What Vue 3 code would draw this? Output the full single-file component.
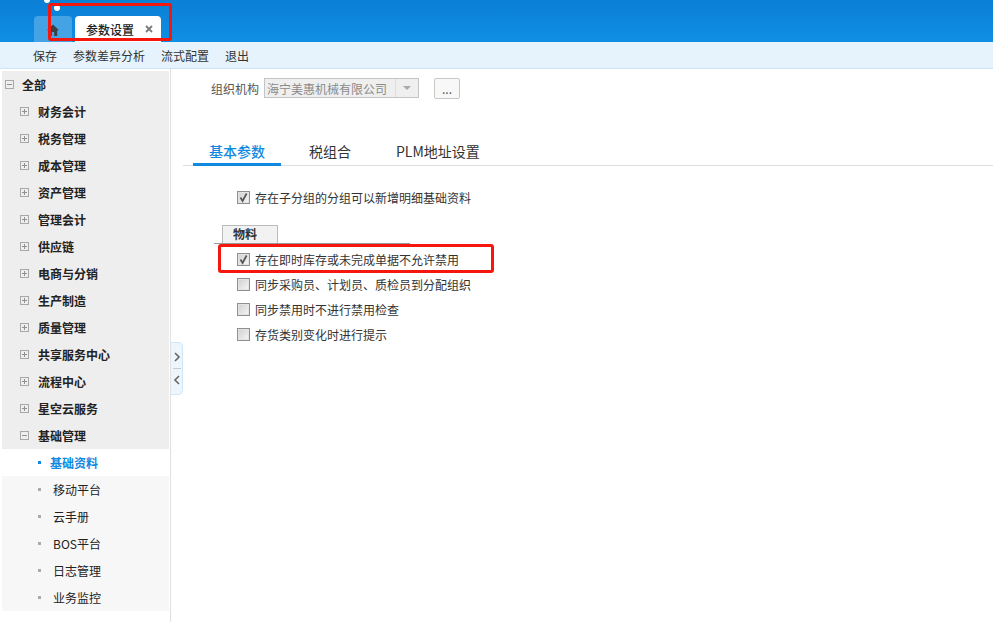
<script setup>
const groups = ['财务会计', '税务管理', '成本管理', '资产管理', '管理会计', '供应链', '电商与分销', '生产制造', '质量管理', '共享服务中心', '流程中心', '星空云服务']
const subItems = ['移动平台', '云手册', 'BOS平台', '日志管理', '业务监控']
const toolbarItems = ['保存', '参数差异分析', '流式配置', '退出']
const tabs = ['基本参数', '税组合', 'PLM地址设置']
const materialOptions = [
  { label: '存在即时库存或未完成单据不允许禁用', checked: true },
  { label: '同步采购员、计划员、质检员到分配组织', checked: false },
  { label: '同步禁用时不进行禁用检查', checked: false },
  { label: '存货类别变化时进行提示', checked: false }
]
</script>

<template>
  <div class="page">
    <header class="topbar">
      <i class="dot dot-a"></i>
      <i class="dot dot-b"></i>
      <div class="home-tab">
        <svg width="12" height="12" viewBox="0 0 12 12"><path d="M6 .5 0 6.2h1.8V12h3V8h2.4v4h3V6.2H12L6 .5z" fill="#3b4047"/></svg>
      </div>
      <div class="active-tab">
        <span>参数设置</span>
        <svg class="close" width="8" height="8" viewBox="0 0 8 8"><path d="M1 1l6 6M7 1 1 7" stroke="#7a7a7a" stroke-width="1.8"/></svg>
      </div>
    </header>

    <nav class="toolbar">
      <span v-for="item in toolbarItems" :key="item">{{ item }}</span>
    </nav>

    <div class="body">
      <aside class="sidebar">
        <div class="row root">
          <i class="box minus"></i>
          <span>全部</span>
        </div>
        <div v-for="g in groups" :key="g" class="row group">
          <i class="box plus"></i>
          <span>{{ g }}</span>
        </div>
        <div class="row group">
          <i class="box minus"></i>
          <span>基础管理</span>
        </div>
        <div class="row sub active">
          <i class="bullet"></i>
          <span>基础资料</span>
        </div>
        <div v-for="s in subItems" :key="s" class="row sub">
          <i class="bullet"></i>
          <span>{{ s }}</span>
        </div>
      </aside>

      <div class="collapse">
        <svg width="8" height="10" viewBox="0 0 8 10"><path d="M2 1l4 4-4 4" fill="none" stroke="#666" stroke-width="1.6"/></svg>
        <i class="collapse-line"></i>
        <svg width="8" height="10" viewBox="0 0 8 10"><path d="M6 1 2 5l4 4" fill="none" stroke="#666" stroke-width="1.6"/></svg>
      </div>

      <main class="content">
        <div class="org">
          <label>组织机构</label>
          <div class="select">
            <span class="select-value">海宁美惠机械有限公司</span>
            <span class="select-arrow"></span>
          </div>
          <button class="more">...</button>
        </div>

        <div class="tabs">
          <div v-for="(t, i) in tabs" :key="t" class="tab" :class="{ current: i === 0 }">{{ t }}</div>
        </div>

        <label class="check first">
          <i class="checkbox checked">
            <svg width="11" height="11" viewBox="0 0 11 11"><path d="M2.5 5.5 4.6 9 8.6 1.5" fill="none" stroke="#555" stroke-width="1.7"/></svg>
          </i>
          <span>存在子分组的分组可以新增明细基础资料</span>
        </label>

        <div class="section">
          <div class="section-title">物料</div>
        </div>

        <div class="options">
          <label v-for="o in materialOptions" :key="o.label" class="check">
            <i class="checkbox" :class="{ checked: o.checked }">
              <svg v-if="o.checked" width="11" height="11" viewBox="0 0 11 11"><path d="M2.5 5.5 4.6 9 8.6 1.5" fill="none" stroke="#555" stroke-width="1.7"/></svg>
            </i>
            <span>{{ o.label }}</span>
          </label>
        </div>
      </main>
    </div>

    <!-- red annotation boxes drawn over the screenshot -->
    <div class="mark mark-tab"></div>
    <div class="mark mark-option"></div>
  </div>
</template>

<style scoped>
.page {
  position: relative;
  width: 993px;
  height: 622px;
  overflow: hidden;
  background: #fff;
  font-family: "Noto Sans CJK SC", "Liberation Sans", sans-serif;
  font-size: 12px;
  color: #333;
}

.topbar {
  position: relative;
  height: 42px;
  box-sizing: border-box;
  padding: 16px 0 0 34px;
  display: flex;
  align-items: flex-end;
  gap: 3px;
  background: linear-gradient(to bottom, #0a7fd6, #0f8fe4);
}

.dot {
  position: absolute;
  background: #fff;
  border-radius: 50%;
}
.dot-a { left: 44px; top: -3px; width: 6px; height: 6px; }
.dot-b { left: 54px; top: 5px; width: 6px; height: 6px; }

.home-tab {
  width: 38px;
  height: 26px;
  box-sizing: border-box;
  padding-top: 8px;
  display: flex;
  justify-content: center;
  background: #44a3e4;
  border-radius: 4px 4px 0 0;
}

.active-tab {
  width: 86px;
  height: 26px;
  box-sizing: border-box;
  padding: 0 8px 0 11px;
  display: flex;
  align-items: center;
  justify-content: space-between;
  background: #fff;
  border-radius: 4px 4px 0 0;
  color: #222;
  font-weight: 500;
}

.toolbar {
  height: 26px;
  padding-left: 33px;
  display: flex;
  align-items: center;
  gap: 16px;
  background: #e6f3fc;
  border-bottom: 1px solid #cfe3f7;
  color: #333;
}

.body {
  position: relative;
  display: flex;
  height: 553px;
}

.sidebar {
  width: 171px;
  height: 100%;
  box-sizing: border-box;
  padding: 2px 0 0 2px;
  border-right: 1px solid #e0e0e0;
  flex-shrink: 0;
}

.row {
  height: 27px;
  width: 167px;
  display: flex;
  align-items: center;
  font-weight: 700;
  color: #222;
  background: #eee;
}

.root { padding-left: 3px; box-sizing: border-box; gap: 8px; }
.group { padding-left: 18px; box-sizing: border-box; gap: 9px; }

.box {
  position: relative;
  width: 9px;
  height: 9px;
  box-sizing: border-box;
  border: 1px solid #a8a8a8;
  flex-shrink: 0;
}
.box::before {
  content: '';
  position: absolute;
  left: 1px;
  top: 3px;
  width: 5px;
  height: 1px;
  background: #909090;
}
.plus::after {
  content: '';
  position: absolute;
  left: 3px;
  top: 1px;
  width: 1px;
  height: 5px;
  background: #909090;
}

.sub {
  padding-left: 36px;
  box-sizing: border-box;
  gap: 12px;
  background: #f7f7f7;
  font-weight: 400;
}
.sub.active {
  gap: 9px;
  background: #fff;
  color: #0f8ae0;
  font-weight: 700;
}

.bullet {
  width: 3px;
  height: 3px;
  background: #aaa;
  flex-shrink: 0;
}
.active .bullet { background: #0f8ae0; }

.collapse {
  position: absolute;
  left: 171px;
  top: 273px;
  width: 12px;
  height: 53px;
  box-sizing: border-box;
  display: flex;
  flex-direction: column;
  align-items: center;
  justify-content: space-between;
  padding: 9px 0;
  background: #eef6fd;
  border: 1px solid #cfe5f8;
  border-left: 0;
  border-radius: 0 5px 5px 0;
}
.collapse-line {
  width: 8px;
  height: 1px;
  background: #ccc;
}

.content {
  flex: 1;
  min-width: 0;
  padding-top: 8px;
}

.org {
  display: flex;
  align-items: center;
  height: 22px;
  padding-left: 40px;
  color: #555;
}

.select {
  width: 155px;
  height: 20px;
  margin-left: 5px;
  box-sizing: border-box;
  display: flex;
  align-items: center;
  background: #efefef;
  border: 1px solid #c4c4c4;
  color: #8a8a8a;
}
.select-value {
  flex: 1;
  padding-left: 2px;
  white-space: nowrap;
}
.select-arrow {
  position: relative;
  width: 22px;
  height: 18px;
  border-left: 1px solid #ddd;
}
.select-arrow::after {
  content: '';
  position: absolute;
  left: 7px;
  top: 7px;
  border: 4px solid transparent;
  border-top: 4px solid #aaa;
  border-bottom: 0;
}

.more {
  width: 26px;
  height: 21px;
  margin-left: 15px;
  padding: 0;
  font-family: inherit;
  font-size: 12px;
  color: #555;
  background: #f8f8f8;
  border: 1px solid #c8c8c8;
  border-radius: 2px;
}

.tabs {
  display: flex;
  height: 27px;
  margin: 39px 0 0 12px;
  padding-left: 26px;
  border-bottom: 1px solid #ddd;
  font-size: 14px;
  color: #333;
}

.tab {
  position: relative;
  margin-right: 45px;
  padding: 0;
  line-height: 26px;
  white-space: nowrap;
}
.tab.current {
  margin-right: 44px;
  color: #0f8ae0;
  font-weight: 500;
}
.tab.current::after {
  content: '';
  position: absolute;
  left: -16px;
  right: -16px;
  bottom: -1px;
  height: 3px;
  background: #0f8ae0;
}

.check {
  display: flex;
  align-items: center;
  gap: 5px;
  height: 25px;
  padding-left: 66px;
  color: #333;
}
.check.first {
  margin-top: 19px;
}

.checkbox {
  width: 13px;
  height: 13px;
  box-sizing: border-box;
  display: flex;
  align-items: center;
  justify-content: center;
  border: 1px solid #8f8f8f;
  box-shadow: inset 0 0 0 1px #e4e4e4;
  background: linear-gradient(135deg, #cfcfcf, #f7f7f7);
  flex-shrink: 0;
}

.section {
  margin: 15px 0 0 43px;
  width: 196px;
  height: 19px;
  padding-left: 8px;
  box-sizing: border-box;
  border-bottom: 1px solid #999;
}
.section-title {
  width: 56px;
  height: 18px;
  box-sizing: border-box;
  padding-left: 10px;
  line-height: 16px;
  font-weight: 700;
  color: #333;
  background: #f2f2f2;
  border: 1px solid #bbb;
  border-bottom: 0;
}

.options {
  margin-top: 3px;
}

.mark {
  position: absolute;
  box-sizing: border-box;
  border: 3px solid #f5160e;
  border-radius: 3px;
}
.mark-tab {
  left: 48px;
  top: 3px;
  width: 124px;
  height: 38px;
}
.mark-option {
  left: 218px;
  top: 244px;
  width: 276px;
  height: 29px;
}
</style>
